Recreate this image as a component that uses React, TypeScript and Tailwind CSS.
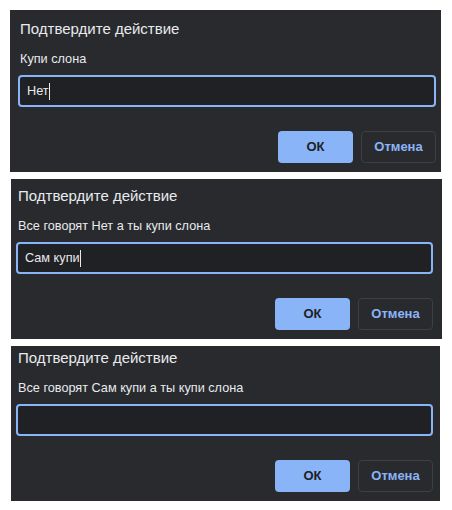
type DialogProps = {
  message: string;
  value: string;
  showCaret?: boolean;
  frame: string;
};

const PromptDialog = ({ message, value, showCaret = true, frame }: DialogProps) => {
  return (
    <div className={`bg-[#292a2d] flex flex-col font-['Liberation_Sans',Arial,sans-serif] ${frame}`}>
      {/* Title */}
      <div className="pl-[2px] h-[20px] leading-[20px] text-[15px] text-[#e8eaed]">
        Подтвердите действие
      </div>

      {/* Message */}
      <div className="mt-[12px] pl-[2px] h-[16px] leading-[16px] text-[12.7px] text-[#e8eaed]">
        {message}
      </div>

      {/* Input */}
      <div className="mt-[8px] h-[32px] rounded-[4px] border-2 border-[#8ab4f8] bg-[#202124] flex items-center px-[7px]">
        <span className="text-[12.7px] leading-[16px] text-[#e8eaed]">{value}</span>
        {showCaret && <span className="w-px h-[17px] bg-[#e8eaed]"></span>}
      </div>

      {/* Buttons */}
      <div className="mt-[24px] flex justify-end gap-[8px]">
        <button className="w-[75px] h-[32px] rounded-[4px] bg-[#8ab4f8] text-[#202124] text-[13px] font-semibold">
          ОК
        </button>
        <button className="w-[75px] h-[32px] rounded-[4px] border border-[#3c4043] text-[#8ab4f8] text-[13px] font-semibold">
          Отмена
        </button>
      </div>
    </div>
  );
};

const App = () => {
  return (
    <div className="w-[452px] h-[510px] bg-white flex flex-col">
      <PromptDialog
        frame="mt-[10px] ml-[10px] w-[431px] h-[162px] pt-[9px] pl-[8px] pr-[5px]"
        message="Купи слона"
        value="Нет"
      />
      <PromptDialog
        frame="mt-[7px] ml-[11px] w-[431px] h-[160px] pt-[7px] pl-[5px] pr-[9px]"
        message="Все говорят Нет а ты купи слона"
        value="Сам купи"
      />
      <PromptDialog
        frame="mt-[7px] ml-[11px] w-[429px] h-[155px] pt-[2px] pl-[5px] pr-[7px]"
        message="Все говорят Сам купи а ты купи слона"
        value=""
        showCaret={false}
      />
    </div>
  );
};

export default App;
